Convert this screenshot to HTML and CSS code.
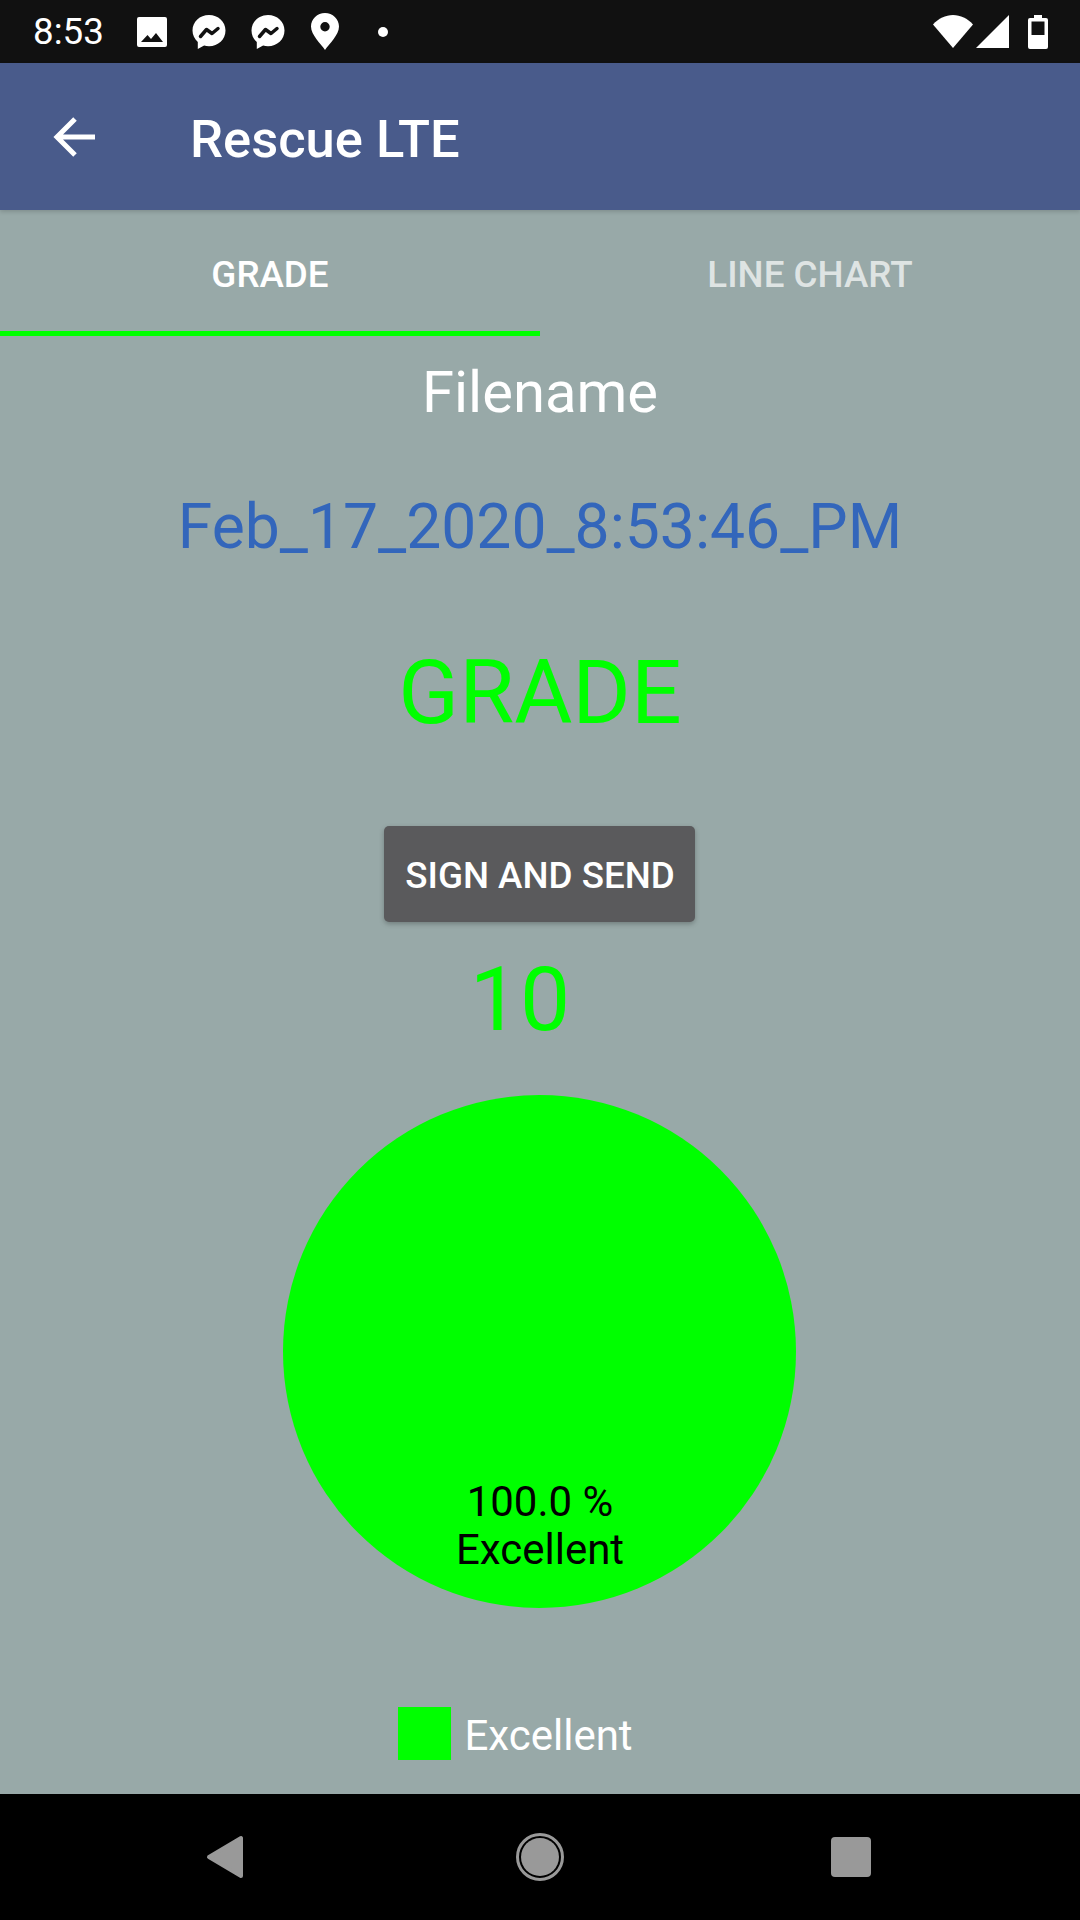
FILE: index.html
```html
<!DOCTYPE HTML>
<html>
<head>
  <meta charset="utf-8">
  <title>Rescue LTE</title>
  <link rel="stylesheet" href="styles.css">
</head>
<body>
  <div class="status-bar">
    <span class="clock">8:53</span>
    <div class="notif-icons">
      <svg class="ic-image" viewBox="0 0 30 30"><path fill="#fff" fill-rule="evenodd" d="M2 0h26a2 2 0 0 1 2 2v26a2 2 0 0 1-2 2H2a2 2 0 0 1-2-2V2a2 2 0 0 1 2-2zM4 25h22l-7-9-5 6-3.500-4z"/></svg>
      <svg class="ic-msg" viewBox="0 0 34 36"><path fill="#fff" d="M17 1C7.800 1 .5 7.800.5 16.500c0 4.600 2 8.600 5.300 11.400V35l6.300-3.400c1.600.4 3.200.6 4.900.6 9.200 0 16.500-6.800 16.500-15.700S26.200 1 17 1z"/><path fill="none" stroke="#111" stroke-width="3.500" stroke-linejoin="round" stroke-linecap="round" d="M8.500 22.500l6-7 5.500 4 6-5"/></svg>
      <svg class="ic-msg second" viewBox="0 0 34 36"><path fill="#fff" d="M17 1C7.800 1 .5 7.800.5 16.500c0 4.600 2 8.600 5.300 11.400V35l6.300-3.400c1.600.4 3.200.6 4.900.6 9.200 0 16.500-6.800 16.500-15.700S26.200 1 17 1z"/><path fill="none" stroke="#111" stroke-width="3.500" stroke-linejoin="round" stroke-linecap="round" d="M8.500 22.500l6-7 5.500 4 6-5"/></svg>
      <svg class="ic-pin" viewBox="0 0 28 37"><path fill="#fff" fill-rule="evenodd" d="M14 0C6.300 0 0 6 0 13.500 0 22 10 31 14 37c4-6 14-15 14-23.500C28 6 21.700 0 14 0zm0 9a4.700 4.700 0 1 1 0 9.400A4.700 4.700 0 0 1 14 9z"/></svg>
      <span class="dot"></span>
    </div>
    <div class="sys-icons">
      <svg class="ic-wifi" viewBox="0 0 40 33"><path fill="#fff" d="M0 9.500C5.500 3.500 12.500 0 20 0s14.500 3.500 20 9.500L20 33z"/></svg>
      <svg class="ic-signal" viewBox="0 0 33 33"><path fill="#fff" d="M33 0v33H0z"/></svg>
      <svg class="ic-battery" viewBox="0 0 20 34"><path fill="#fff" fill-rule="evenodd" d="M6 0h8v3h4a2 2 0 0 1 2 2v27a2 2 0 0 1-2 2H2a2 2 0 0 1-2-2V5a2 2 0 0 1 2-2h4zM3.500 6.500V20h13V6.500z"/></svg>
    </div>
  </div>

  <header class="app-bar">
    <svg class="ic-back" viewBox="0 0 42 40"><path fill="none" stroke="#fff" stroke-width="5" d="M42 20H4M22 2L4 20l18 18"/></svg>
    <h1 class="app-title">Rescue LTE</h1>
  </header>

  <main class="content">
    <nav class="tabs">
      <div class="tab tab-active">GRADE</div>
      <div class="tab">LINE CHART</div>
    </nav>

    <div class="filename-label">Filename</div>
    <div class="filename">Feb_17_2020_8:53:46_PM</div>
    <div class="grade-title">GRADE</div>
    <button class="sign-btn">SIGN AND SEND</button>
    <div class="score">10</div>

    <div class="pie">
      <div class="pie-label">100.0 %<br>Excellent</div>
    </div>

    <div class="legend">
      <span class="legend-box"></span>
      <span class="legend-text">Excellent</span>
    </div>
  </main>

  <footer class="nav-bar">
    <svg class="ic-nav-back" viewBox="0 0 38 44"><path fill="#999" stroke="#999" stroke-width="4" stroke-linejoin="round" d="M35 3v38L3 22z"/></svg>
    <svg class="ic-nav-home" viewBox="0 0 48 48"><circle cx="24" cy="24" r="22.500" fill="none" stroke="#999" stroke-width="3"/><circle cx="24" cy="24" r="19" fill="#999"/></svg>
    <span class="nav-square"></span>
  </footer>
</body>
</html>
```

FILE: styles.css
```css
* {
  box-sizing: border-box;
}
html, body {
  margin: 0;
  padding: 0;
}
body {
  width: 1080px;
  height: 1920px;
  display: flex;
  flex-direction: column;
  font-family: Roboto, "Liberation Sans", sans-serif;
  background: #000;
  overflow: hidden;
}

/* status bar */
.status-bar {
  height: 63px;
  background: #111;
  color: #fff;
  display: flex;
  align-items: center;
  padding: 0 32px 0 33px;
}
.clock {
  font-size: 36.75px;
  width: 104px;
}
.notif-icons {
  display: flex;
  align-items: center;
}
.ic-image {
  width: 30px;
  height: 30px;
  margin-right: 25px;
}
.ic-msg {
  width: 34px;
  height: 36px;
  margin-right: 25px;
}
.ic-msg.second {
  margin-right: 26px;
}
.ic-pin {
  width: 28px;
  height: 37px;
  margin-right: 39px;
}
.dot {
  width: 10px;
  height: 10px;
  border-radius: 50%;
  background: #fff;
}
.sys-icons {
  margin-left: auto;
  display: flex;
  align-items: center;
}
.ic-wifi {
  width: 40px;
  height: 33px;
  margin-right: 3px;
}
.ic-signal {
  width: 33px;
  height: 33px;
  margin-right: 19px;
}
.ic-battery {
  width: 20px;
  height: 34px;
}

/* app bar */
.app-bar {
  position: relative;
  height: 147px;
  background: #495b8b;
  display: flex;
  align-items: center;
  padding-left: 53px;
  color: #fff;
  box-shadow: 0 2px 4px rgba(0, 0, 0, 0.15);
}
.ic-back {
  width: 42px;
  height: 40px;
  margin-right: 95px;
}
.app-title {
  margin: 4px 0 0;
  font-size: 52.5px;
  font-weight: 500;
}

/* main */
.content {
  height: 1584px;
  background: #98a9a8;
  display: flex;
  flex-direction: column;
  align-items: center;
}
.tabs {
  width: 100%;
  height: 126px;
  display: flex;
}
.tab {
  flex: 1;
  display: flex;
  align-items: center;
  justify-content: center;
  padding-top: 8px;
  border-bottom: 5px solid transparent;
  font-size: 36.75px;
  font-weight: 500;
  color: rgba(255, 255, 255, 0.7);
}
.tab-active {
  color: #fff;
  border-bottom-color: #00ff00;
}
.filename-label {
  font-size: 58px;
  line-height: 66px;
  margin-top: 23px;
  color: #fff;
}
.filename {
  font-size: 62.4px;
  line-height: 70px;
  margin-top: 67px;
  color: #3366bb;
}
.grade-title {
  font-size: 89.25px;
  line-height: 104px;
  margin-top: 79px;
  color: #00ff00;
}
.sign-btn {
  display: block;
  width: 311px;
  height: 96px;
  margin: 81px 2px 0 0;
  padding: 2px 0 0 2px;
  border: none;
  border-radius: 5px;
  background: #5a5a5c;
  color: #fff;
  font-family: inherit;
  font-size: 36.75px;
  font-weight: 500;
  box-shadow: 0 2px 5px rgba(0, 0, 0, 0.25);
}
.score {
  font-size: 89.25px;
  line-height: 104px;
  margin-top: 26px;
  margin-right: 40px;
  color: #00ff00;
}
.pie {
  width: 513px;
  height: 513px;
  margin: 43px 2px 0 0;
  border-radius: 50%;
  background: #00ff00;
  display: flex;
  flex-direction: column;
  justify-content: flex-end;
  align-items: center;
  padding-bottom: 34px;
}
.pie-label {
  color: #000;
  font-size: 42px;
  line-height: 48px;
  text-align: center;
  margin-left: 2px;
}
.legend {
  display: flex;
  align-items: center;
  margin-top: 99px;
  margin-right: 49px;
}
.legend-box {
  width: 53px;
  height: 53px;
  background: #00ff00;
  margin-right: 13px;
}
.legend-text {
  color: #fff;
  font-size: 42px;
  padding-top: 4px;
}

/* nav bar */
.nav-bar {
  height: 126px;
  background: #000;
  display: flex;
  align-items: center;
  padding-left: 206px;
}
.ic-nav-back {
  width: 38px;
  height: 44px;
  margin-right: 272px;
}
.ic-nav-home {
  width: 48px;
  height: 48px;
  margin-right: 267px;
}
.nav-square {
  width: 40px;
  height: 40px;
  border-radius: 4px;
  background: #999;
}
```
